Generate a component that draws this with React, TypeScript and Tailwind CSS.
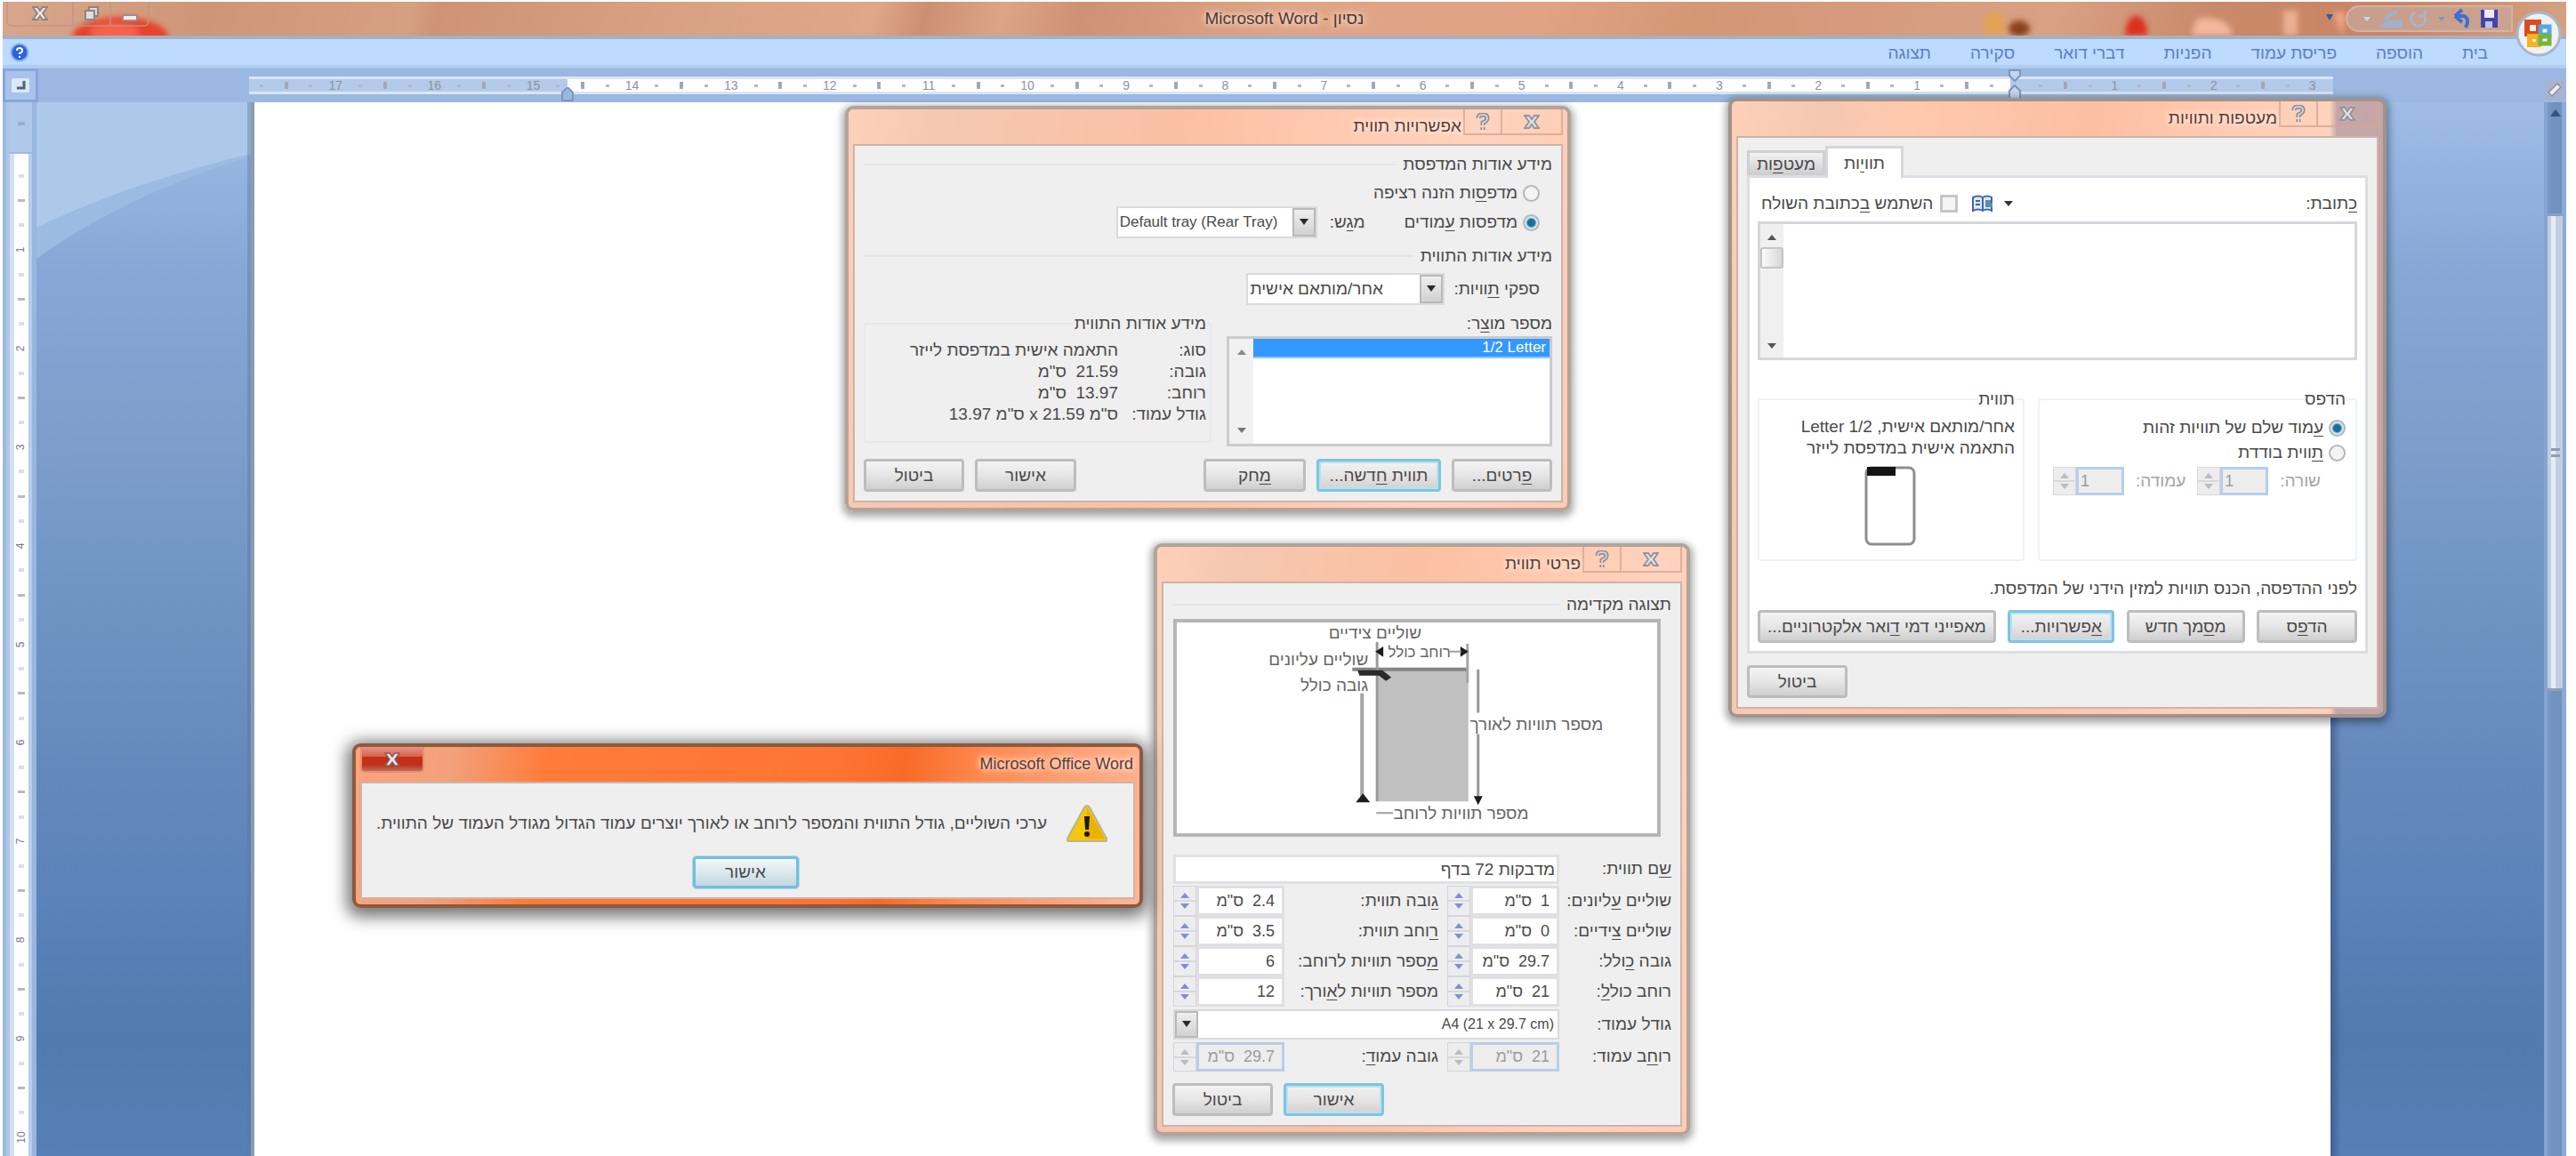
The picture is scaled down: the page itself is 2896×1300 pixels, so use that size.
import React from "react";

/** Renders a label whose access key is marked with "&". */
function Mn({ s }: { s: string }) {
  const i = s.indexOf("&");
  if (i < 0) return <>{s}</>;
  return (
    <>
      {s.slice(0, i)}
      <span className="underline underline-offset-3">{s[i + 1]}</span>
      {s.slice(i + 2)}
    </>
  );
}

function Btn({ s, className = "", primary = false }: { s: string; className?: string; primary?: boolean }) {
  const look = primary
    ? "border-[#7fc4de] bg-linear-to-b from-[#f3f3f3] via-[#e6e4e4] to-[#d6d0d0] shadow-[inset_0_0_0_2px_#b5e3f2]"
    : "border-[#bdbdbd] bg-linear-to-b from-[#f3f3f3] via-[#e6e6e6] to-[#cfcfcf]";
  return (
    <button type="button" className={`h-[37px] shrink-0 whitespace-nowrap rounded-[4px] border-3 text-center leading-6 ${look} ${className}`}>
      <Mn s={s} />
    </button>
  );
}

function Radio({ id, name, label, checked = false }: { id: string; name: string; label: string; checked?: boolean }) {
  return (
    <span className="flex h-6 items-center gap-1.5">
      <input
        id={id}
        name={name}
        type="radio"
        defaultChecked={checked}
        className="size-[19px] shrink-0 appearance-none rounded-full border-2 border-[#b4b8bb] bg-[#f4f4f4] checked:bg-[radial-gradient(circle,#1c6f9c_0_4px,#cfe6f1_6px)]"
      />
      <label htmlFor={id} className="whitespace-nowrap">
        <Mn s={label} />
      </label>
    </span>
  );
}

function Heading({ s }: { s: string }) {
  return (
    <div className="flex h-6 items-center gap-2">
      <h3 className="whitespace-nowrap">{s}</h3>
      <span className="h-0.5 flex-1 bg-[#e3e6e9]" />
    </div>
  );
}

function Combo({ id, value, className, arrow }: { id: string; value: string; className: string; arrow: "left" | "right" }) {
  return (
    <span dir="ltr" className={`flex items-stretch border-2 border-[#d9dade] bg-white ${arrow === "left" ? "flex-row-reverse" : ""} ${className}`}>
      <select
        id={id}
        className={`min-w-0 flex-1 appearance-none bg-transparent outline-none ${arrow === "left" ? "px-1 [text-align-last:right]" : "px-0.5"}`}
      >
        <option>{value}</option>
      </select>
      <span className="flex w-[26px] items-center justify-center border-2 border-[#b9b9b9] bg-linear-to-b from-[#eeeeee] to-[#d2d2d2]">
        <svg viewBox="0 0 12 8" className="h-2 w-3" aria-hidden="true">
          <path d="M1 0H11L6 7Z" fill="#2a2a2a" />
        </svg>
      </span>
    </span>
  );
}

function Spin({ id, value, disabled = false, className = "" }: { id: string; value: string; disabled?: boolean; className?: string }) {
  const arrow = disabled ? "#bcbcbc" : "#8290cf";
  const box = disabled ? "border-[#b7cfe9] bg-[#ededed] text-[#9c9c9c]" : "border-[#e0e0e4] bg-white";
  return (
    <span dir="ltr" className={`flex items-stretch bg-[#d9d9dc] ${className}`}>
      <span className="flex w-[26px] shrink-0 flex-col gap-0.5 border border-[#d6d6da]">
        <button type="button" aria-label="הגדל" className="flex flex-1 items-end justify-center bg-[#ededf0] pb-0.5">
          <svg viewBox="0 0 10 6" className="h-1.5 w-2.5" aria-hidden="true">
            <path d="M0 6H10L5 0Z" fill={arrow} />
          </svg>
        </button>
        <button type="button" aria-label="הקטן" className="flex flex-1 items-start justify-center bg-[#ededf0] pt-0.5">
          <svg viewBox="0 0 10 6" className="h-1.5 w-2.5" aria-hidden="true">
            <path d="M0 0H10L5 6Z" fill={arrow} />
          </svg>
        </button>
      </span>
      <input id={id} dir="rtl" defaultValue={value} disabled={disabled} className={`min-w-0 flex-1 whitespace-pre border-3 px-2 text-[18px] outline-none ${box}`} />
    </span>
  );
}

function Group({ legend, className, children }: { legend: string; className: string; children: React.ReactNode }) {
  return (
    <fieldset className={`min-w-0 rounded-[4px] border-2 ${className}`}>
      <legend className="h-6 leading-6">{legend}</legend>
      {children}
    </fieldset>
  );
}

const frames = {
  hot: "border-[#8b5a41] bg-[linear-gradient(100deg,#ffa37a_0%,#f2a17c_12%,#ff7b3a_24%,#ff7433_60%,#f96a26_68%,#ff8a52_78%,#ffb696_100%)] shadow-[0_4px_18px_6px_rgba(0,0,0,0.55)]",
  soft: "border-[#b2a49b] bg-[linear-gradient(100deg,#ffd0b8_0%,#f5c8b0_12%,#fbbfa3_42%,#ffc6ab_56%,#ffd3be_80%,#ffcbb2_100%)] shadow-[0_3px_9px_3px_rgba(0,0,0,0.35)]",
  shaded:
    "border-[#a0938f] bg-[linear-gradient(90deg,transparent_calc(100%-60px),rgba(158,138,155,0.6)_calc(100%-52px)),linear-gradient(100deg,#ffd0b8_0%,#f5c8b0_12%,#ffc9ae_24%,#fbbfa3_48%,#ffc6ab_58%,#ffd3be_80%,#ffcbb2_100%)] shadow-[0_3px_9px_3px_rgba(0,0,0,0.35)]",
};

function Win({ title, className, tone = "soft", children }: { title: string; className: string; tone?: keyof typeof frames; children: React.ReactNode }) {
  const hot = tone === "hot";
  const cell = "flex h-[29px] items-center justify-center border-2 border-t-0";
  return (
    <section dir="rtl" aria-label={title} className={`absolute rounded-[9px] border-4 px-[5px] pb-1.5 ${frames[tone]} ${className}`}>
      <header className="flex h-[39px] items-center justify-between">
        <div className="flex h-full items-center">
          {!hot && (
            <div className="flex items-start self-start">
              <button type="button" aria-label="סגור" className={`w-[70px] border-[#d5a793]/80 ${cell}`}>
                <svg viewBox="0 0 18 16" className="h-4 w-[18px]" aria-hidden="true">
                  <path d="M1 1H6L9 5L12 1H17L12 8L17 15H12L9 11L6 15H1L6 8Z" fill="#dfe2e8" stroke="#97939a" strokeWidth="2" />
                </svg>
              </button>
              <button type="button" aria-label="עזרה" className={`w-[42px] border-r-0 border-[#d5a793]/80 ${cell}`}>
                <svg viewBox="0 0 16 20" className="h-5 w-4" aria-hidden="true">
                  <path d="M3 6Q3 2 8 2Q13 2 13 6Q13 9 8 11V14M8 16V19" fill="none" stroke="#8d8a90" strokeWidth="5" />
                  <path d="M3 6Q3 2 8 2Q13 2 13 6Q13 9 8 11V14M8 16V19" fill="none" stroke="#cdd2da" strokeWidth="2" />
                </svg>
              </button>
            </div>
          )}
          <h2 className={`px-0.5 text-[#5b3c33] [text-shadow:0_0_6px_#fff,0_0_10px_#ffe6da] ${hot ? "text-[18px]" : ""}`} dir="auto">
            {title}
          </h2>
        </div>
        {hot && (
          <button
            type="button"
            aria-label="סגור"
            className="flex h-[29px] w-[72px] items-center justify-center self-start rounded-b-[5px] border-2 border-t-0 border-[#e88d72] bg-[linear-gradient(#e99486_0%,#d9604f_40%,#c62f19_42%,#c0301a_75%,#b9705c_100%)]"
          >
            <svg viewBox="0 0 18 16" className="h-4 w-[18px]" aria-hidden="true">
              <path d="M1 1H6L9 5L12 1H17L12 8L17 15H12L9 11L6 15H1L6 8Z" fill="#e9e9ee" stroke="#8c5b5b" strokeWidth="1.5" />
            </svg>
          </button>
        )}
      </header>
      <div className="border-2 border-[#cdb4a9] bg-[#efefef]">{children}</div>
    </section>
  );
}

function EnvelopesWindow() {
  return (
    <Win title="מעטפות ותוויות" tone="shaded" className="left-[1943px] top-[110px] w-[740px]">
      <div className="px-2.5 pt-[9px] pb-2.5">
        <div role="tablist" dir="ltr" className="flex h-[33px] items-end">
          <button type="button" role="tab" aria-selected="false" className="h-7 w-[88px] border-3 border-b-0 border-[#cfcfd3] bg-linear-to-b from-[#f2f2f2] to-[#cdcdcd] leading-6">
            <Mn s="מעט&פות" />
          </button>
          <button type="button" role="tab" aria-selected="true" className="relative -mb-[3px] h-9 w-[88px] border-3 border-b-0 border-[#d6d7dc] bg-white leading-6">
            <Mn s="תוו&יות" />
          </button>
        </div>
        <div className="border-3 border-[#dcdde2] bg-white px-[9px] pt-[15px] pb-[9px]">
          <div className="flex h-7 items-center justify-between">
            <label htmlFor="addr">
              <Mn s="&כתובת:" />
            </label>
            <div className="flex items-center">
              <button type="button" aria-label="פנקס כתובות" className="flex items-center gap-3">
                <svg viewBox="0 0 10 6" className="h-1.5 w-2.5" aria-hidden="true">
                  <path d="M0 0H10L5 6Z" fill="#333" />
                </svg>
                <svg viewBox="0 0 24 20" className="h-5 w-6" aria-hidden="true">
                  <path d="M1 3Q7 0 12 3Q17 0 22 3V18Q17 15 12 18Q7 15 1 18Z" fill="#dfe9f8" stroke="#3f65a8" strokeWidth="2" />
                  <path d="M12 3V18M4 7H9M4 11H9" stroke="#3f65a8" strokeWidth="2" />
                  <path d="M15 6H21V14H15Z" fill="#5c85cb" />
                  <path d="M19 9H23V14H19Z" fill="#5d9c70" />
                </svg>
              </button>
              <input id="ret" type="checkbox" className="mr-4 size-5 appearance-none border-3 border-[#c6c6c8] bg-[#f5f5f5]" />
              <label htmlFor="ret" className="mr-2 ml-1">
                <Mn s="השתמש &בכתובת השולח" />
              </label>
            </div>
          </div>
          <div className="mt-1.5 flex h-[156px] border-3 border-[#d6d7dc] bg-white">
            <textarea id="addr" className="flex-1 resize-none outline-none" />
            <div className="flex w-[26px] flex-col items-center bg-[#f0f0f0] pt-3 pb-2.5">
              <svg viewBox="0 0 10 6" className="h-1.5 w-2.5" aria-hidden="true">
                <path d="M0 6H10L5 0Z" fill="#555" />
              </svg>
              <span className="mt-2 h-6 w-full rounded-[3px] border-2 border-[#c4c4c8] bg-linear-to-r from-[#fbfbfb] to-[#d7d7da]" />
              <svg viewBox="0 0 10 6" className="mt-auto h-1.5 w-2.5" aria-hidden="true">
                <path d="M0 0H10L5 6Z" fill="#555" />
              </svg>
            </div>
          </div>
          <div className="mt-8 flex gap-[15px]">
            <Group legend="הדפס" className="h-[194px] w-[359px] border-[#eef2f5] px-[11px]">
              <div className="pt-2">
                <Radio id="full" name="print" label="&עמוד שלם של תוויות זהות" checked />
              </div>
              <div className="pt-1">
                <Radio id="single" name="print" label="&תווית בודדת" />
              </div>
              <div className="mt-1 flex h-8 items-center gap-[13px] pr-7 text-[#a5a5a5]">
                <label htmlFor="row">שורה:</label>
                <Spin id="row" value="1" disabled className="h-8 w-20 [&>input]:pl-0.5 [&>input]:text-left" />
                <label htmlFor="col">עמודה:</label>
                <Spin id="col" value="1" disabled className="h-8 w-20 [&>input]:pl-0.5 [&>input]:text-left" />
              </div>
            </Group>
            <Group legend="תווית" className="h-[194px] flex-1 border-[#eef2f5] px-[9px]">
              <p className="pt-[7px] leading-6">אחר/מותאם אישית, 1/2 Letter</p>
              <p className="leading-6">התאמה אישית במדפסת לייזר</p>
              <svg viewBox="0 0 60 92" className="mx-auto mt-2 h-[92px] w-[60px]" aria-label="תווית">
                <rect x="2" y="2" width="54" height="86" rx="6" fill="#fff" stroke="#8e8e8e" strokeWidth="3" />
                <rect x="3" y="1" width="32" height="10" fill="#141414" />
              </svg>
            </Group>
          </div>
          <p className="mt-[19px] leading-6">לפני ההדפסה, הכנס תוויות למזין הידני של המדפסת.</p>
          <div className="mt-3 flex justify-between">
            <Btn s="הד&פס" className="w-[113px]" />
            <Btn s="מ&סמך חדש" className="w-[133px]" />
            <Btn s="&אפשרויות..." primary className="w-[120px]" />
            <Btn s="מאפייני דמי &דואר אלקטרוניים..." className="w-[268px]" />
          </div>
        </div>
        <div className="mt-[13px] flex justify-end">
          <Btn s="ביטול" className="w-[113px]" />
        </div>
      </div>
    </Win>
  );
}

const labelInfo: [string, string][] = [
  ["סוג:", "התאמה אישית במדפסת לייזר"],
  ["גובה:", '21.59  ס"מ'],
  ["רוחב:", '13.97  ס"מ'],
  ["גודל עמוד:", 'ס"מ 21.59 x ס"מ 13.97'],
];

function OptionsWindow() {
  return (
    <Win title="אפשרויות תווית" className="left-[950px] top-[119px] w-[816px]">
      <div className="px-2.5 pt-[9px] pb-2.5">
        <Heading s="מידע אודות המדפסת" />
        <div className="mt-2 pr-3.5">
          <Radio id="cont" name="printer" label="מדפ&סות הזנה רציפה" />
        </div>
        <div className="mt-[3px] flex h-9 items-center pr-3.5">
          <Radio id="pages" name="printer" label="מדפסות &עמודים" checked />
          <label htmlFor="tray" className="mr-11 ml-[14px]">
            <Mn s="מ&גש:" />
          </label>
          <Combo id="tray" value="Default tray (Rear Tray)" arrow="right" className="h-9 w-[226px] text-[17px]" />
        </div>
        <div className="mt-2">
          <Heading s="מידע אודות התווית" />
        </div>
        <div className="mt-[7px] flex h-9 items-center pr-3.5">
          <label htmlFor="vendor" className="ml-2.5">
            <Mn s="ספקי &תוויות:" />
          </label>
          <Combo id="vendor" value="אחר/מותאם אישית" arrow="right" className="h-9 w-[223px]" />
        </div>
        <div className="mt-[9px] flex gap-[17px]">
          <div className="w-[366px]">
            <div id="prod" className="h-6 leading-6">
              <Mn s="מספר מו&צר:" />
            </div>
            <div className="mt-0.5 flex h-[124px] border-3 border-[#c9cbd0] bg-white">
              <ul role="listbox" aria-labelledby="prod" className="flex-1">
                <li role="option" aria-selected="true" dir="ltr" className="h-[22px] border-b-2 border-[#8fc6ff] bg-[#3398ff] pr-1 text-right text-[17px] leading-5 text-white">
                  1/2 Letter
                </li>
              </ul>
              <div className="flex w-[27px] flex-col items-center justify-between bg-[#f1f1f1] py-3">
                <svg viewBox="0 0 10 6" className="h-1.5 w-2.5" aria-hidden="true">
                  <path d="M0 6H10L5 0Z" fill="#8a8a8a" />
                </svg>
                <svg viewBox="0 0 10 6" className="h-1.5 w-2.5" aria-hidden="true">
                  <path d="M0 0H10L5 6Z" fill="#777" />
                </svg>
              </div>
            </div>
          </div>
          <Group legend="מידע אודות התווית" className="h-[146px] flex-1 border-[#e6e9ec] px-1">
            <dl className="grid grid-cols-[99px_1fr] pt-1.5 leading-6">
              {labelInfo.map(([k, v]) => (
                <React.Fragment key={k}>
                  <dt>{k}</dt>
                  <dd className="whitespace-pre">{v}</dd>
                </React.Fragment>
              ))}
            </dl>
          </Group>
        </div>
        <div className="mt-3.5 flex gap-3">
          <Btn s="&פרטים..." className="w-[113px]" />
          <Btn s="תווית &חדשה..." primary className="w-[140px]" />
          <Btn s="&מחק" className="w-[115px]" />
          <Btn s="אישור" className="mr-auto w-[114px]" />
          <Btn s="ביטול" className="w-[113px]" />
        </div>
      </div>
    </Win>
  );
}

function Preview() {
  return (
    <svg viewBox="0 0 550 246" className="block w-full" fontSize="19" fill="#666" direction="rtl" role="img" aria-label="תצוגה מקדימה">
      <rect x="2" y="2" width="546" height="242" fill="#fff" stroke="#b5b5b5" strokeWidth="4" />
      <rect x="229" y="57" width="104" height="149" fill="#c0c0c0" />
      <path d="M202 57H333" stroke="#858585" strokeWidth="4" />
      <path d="M230 26V206" stroke="#9a9a9a" strokeWidth="3" />
      <path d="M332 28V72" stroke="#a5a5a5" strokeWidth="3" />
      <path d="M213 84V204" stroke="#a5a5a5" strokeWidth="4" />
      <path d="M206 207H222L214 197ZM228 37L237 31V43ZM333 37L324 31V43Z" fill="#1c1c1c" />
      <path d="M344 57V106M344 130V205" stroke="#999" strokeWidth="3" />
      <path d="M344 210L339 200H349Z" fill="#1c1c1c" />
      <path d="M208 58H236L246 66L240 70L232 64H210Z" fill="#2a2a2a" />
      <path d="M229 219H248M312 37H325" stroke="#a0a0a0" strokeWidth="2" />
      <text x="280" y="22">שוליים צידיים</text>
      <text x="313" y="43" fontSize="17">רוחב כולל</text>
      <text x="220" y="52">שוליים עליונים</text>
      <text x="220" y="81">גובה כולל</text>
      <text x="485" y="125">מספר תוויות לאורך</text>
      <text x="401" y="226">מספר תוויות לרוחב</text>
    </svg>
  );
}

const cm = (n: string) => `${n}  ס"מ`;
const fieldRows = [
  ["שוליים &עליונים:", cm("1"), "&גובה תווית:", cm("2.4")],
  ["שוליים &צידיים:", cm("0"), "&רוחב תווית:", cm("3.5")],
  ["גובה &כולל:", cm("29.7"), "&מספר תוויות לרוחב:", "6"],
  ["רוחב כול&ל:", cm("21"), "מספר תוויות ל&אורך:", "12"],
];

function DetailsWindow() {
  const grid = "grid grid-cols-[126px_126px_183px_125px] items-center";
  return (
    <Win title="פרטי תווית" className="left-[1297px] top-[611px] w-[603px]">
      <div className="px-2.5 pt-3 pb-2.5">
        <Heading s="תצוגה מקדימה" />
        <div className="mt-1 mr-3 ml-px">
          <Preview />
        </div>
        <div className={`mt-5 h-[33px] ${grid}`}>
          <label htmlFor="lname">
            <Mn s="&שם תווית:" />
          </label>
          <input id="lname" defaultValue="מדבקות 72 בדף" className="col-span-3 h-[33px] border-3 border-[#e0e1e5] bg-white px-0.5 outline-none" />
        </div>
        <div className="mt-0.5">
          {fieldRows.map(([a, av, b, bv], i) => (
            <div key={a} className={`h-[34px] ${grid}`}>
              <label htmlFor={`a${i}`}>
                <Mn s={a} />
              </label>
              <Spin id={`a${i}`} value={av} className="h-[34px]" />
              <label htmlFor={`b${i}`} className="pr-2.5">
                <Mn s={b} />
              </label>
              <Spin id={`b${i}`} value={bv} className="h-[34px]" />
            </div>
          ))}
        </div>
        <div className={`mt-[3px] h-[34px] ${grid}`}>
          <label htmlFor="psize">גודל עמוד:</label>
          <Combo id="psize" value="A4 (21 x 29.7 cm)" arrow="left" className="col-span-3 h-[34px] text-[16px]" />
        </div>
        <div className={`mt-[3px] h-[33px] ${grid}`}>
          <label htmlFor="pw">
            <Mn s="רו&חב עמוד:" />
          </label>
          <Spin id="pw" value={cm("21")} disabled className="h-[33px]" />
          <label htmlFor="ph" className="pr-2.5">
            <Mn s="גובה עמו&ד:" />
          </label>
          <Spin id="ph" value={cm("29.7")} disabled className="h-[33px]" />
        </div>
        <div className="mt-[13px] flex justify-end gap-3">
          <Btn s="אישור" primary className="w-[113px]" />
          <Btn s="ביטול" className="w-[113px]" />
        </div>
      </div>
    </Win>
  );
}

function AlertWindow() {
  return (
    <Win title="Microsoft Office Word" tone="hot" className="left-[396px] top-[836px] w-[889px]">
      <div className="pt-6 pr-[29px] pb-2.5 pl-6">
        <div className="flex items-center gap-[22px]">
          <svg viewBox="0 0 46 42" className="h-[42px] w-[46px] shrink-0" aria-hidden="true">
            <path d="M23 1Q25 1 26 3L45 38Q46 41 43 41H3Q0 41 1 38L20 3Q21 1 23 1Z" fill="#f4c60c" stroke="#b9b39a" strokeWidth="2" />
            <path d="M23 3L43 38H23Z" fill="#e8a400" opacity="0.6" />
            <path d="M20 13H26L25 28H21Z" fill="#1b1b1b" />
            <circle cx="23" cy="33" r="3" fill="#1b1b1b" />
          </svg>
          <p className="whitespace-nowrap">ערכי השוליים, גודל התווית והמספר לרוחב או לאורך יוצרים עמוד הגדול מגודל העמוד של התווית.</p>
        </div>
        <button
          type="button"
          className="mx-auto mt-4 block h-9 w-[119px] rounded-[4px] border-3 border-[#6fc0e0] bg-linear-to-b from-[#f2f8fa] via-[#dbe8ee] to-[#c4d6df] leading-6 shadow-[0_0_0_1px_#bcd6e0]"
        >
          אישור
        </button>
      </div>
    </Win>
  );
}

type Slot = { kind: "dot" | "tick" | "num" | "none"; n?: number };

function buildHorizontal(): Slot[] {
  const slots: Slot[] = [{ kind: "dot" }];
  for (let n = 17; n >= -3; n--) {
    slots.push({ kind: "tick" }, { kind: "dot" });
    slots.push(n === 0 ? { kind: "none" } : { kind: "num", n: Math.abs(n) });
    if (n > -3) slots.push({ kind: "dot" });
  }
  return slots;
}

function buildVertical(): Slot[] {
  const slots: Slot[] = [];
  for (let n = 1; n <= 10; n++) {
    slots.push({ kind: "dot" }, { kind: "tick" }, { kind: "dot" }, { kind: "num", n });
  }
  return slots;
}

function RulerH() {
  return (
    <div dir="ltr" className="flex h-[38px] bg-[#9ab8e1]">
      <div className="flex h-full w-10 items-center justify-center border-3 border-[#88a5dd] bg-[#a9c3ea]">
        <svg viewBox="0 0 20 16" className="h-4 w-5" aria-hidden="true">
          <rect width="20" height="16" rx="2" fill="#dce8f6" />
          <path d="M14 3V11H6" fill="none" stroke="#4e6382" strokeWidth="3" />
        </svg>
      </div>
      <div className="relative mr-[262px] ml-[237px] mt-[9px] flex h-5 flex-1 items-center bg-[linear-gradient(90deg,#b3caea_0_358px,#fff_358px_calc(100%-363px),#b3caea_calc(100%-363px))] pr-2.5 shadow-[inset_0_3px_#dbe5f3,inset_0_-3px_#dbe5f3]">
        {buildHorizontal().map((s, i) => (
          <span key={i} className="flex min-w-0 flex-1 items-center justify-center text-[14px] leading-none text-[#8e929a]">
            {s.kind === "num" && s.n}
            {s.kind === "dot" && <span className="h-[3px] w-1 bg-[#b6b9c2]" />}
            {s.kind === "tick" && <span className="h-2 w-1 bg-[#a4a8b2]" />}
          </span>
        ))}
        <svg viewBox="0 0 14 16" className="absolute left-[351px] top-3 h-4 w-3.5" aria-hidden="true">
          <path d="M7 0L13 6V15H1V6Z" fill="#9bb7dd" stroke="#7c97c0" strokeWidth="2" />
        </svg>
        <svg viewBox="0 0 14 36" className="absolute -top-2 right-[351px] h-9 w-3.5" aria-hidden="true">
          <path d="M1 1H13V7L7 13L1 7ZM7 18L13 24V35H1V24Z" fill="#c5d5ec" stroke="#7c97c0" strokeWidth="2" />
        </svg>
      </div>
    </div>
  );
}

function RulerV() {
  return (
    <div dir="ltr" className="flex h-full w-[38px] flex-col bg-[linear-gradient(90deg,#9bbae2_0_4px,#afc7e7_4px_8px,#d4e0f2_8px_13px,#fff_13px_29px,#b8cceb_29px_33px,#97b6e0_33px)]">
      <div className="ml-2 h-[58px] w-[25px] border-b-2 border-[#9fb9df] bg-[#b0c8e9] pt-3">
        <span className="mx-auto mt-2.5 block h-1 w-2 bg-[#98aed0]" />
      </div>
      <div className="ml-3 flex w-[17px] flex-1 flex-col pt-[11px] pb-[7px]">
        {buildVertical().map((s, i) => (
          <span key={i} className="flex min-h-0 flex-1 items-center justify-center text-[12px] leading-none text-[#77797f]">
            {s.kind === "num" && <span className="-rotate-90">{s.n}</span>}
            {s.kind === "dot" && <span className="h-1 w-1.5 bg-[#dedee2]" />}
            {s.kind === "tick" && <span className="h-[3px] w-2 bg-[#b9bac0]" />}
          </span>
        ))}
      </div>
    </div>
  );
}

function TitleBar() {
  return (
    <div className="relative flex h-[38px] items-center justify-center overflow-hidden bg-[linear-gradient(105deg,#d9a78d_0%,#cf9577_8%,#d79f81_16%,#cd9374_17%,#dba385_28%,#dfa687_34%,#cb9071_36%,#dda486_39%,#cd9273_42%,#e0a486_50%,#e0a384_60%,#d39776_66%,#d9a084_80%,#c98a6a_86%,#c98464_93%,#d5a183_100%)]">
      <svg viewBox="0 0 2882 38" preserveAspectRatio="xMinYMax slice" className="absolute inset-0 size-full" aria-hidden="true">
        <defs>
          <filter id="soft" x="-20%" y="-20%" width="140%" height="140%">
            <feGaussianBlur stdDeviation="3" />
          </filter>
        </defs>
        <g filter="url(#soft)">
          <ellipse cx="132" cy="40" rx="54" ry="23" fill="#e8432b" />
          <ellipse cx="126" cy="34" rx="28" ry="10" fill="#f8624c" />
          <path d="M2228 38V16Q2232 10 2250 14V38Z" fill="#e2a355" />
          <ellipse cx="2267" cy="30" rx="12" ry="9" fill="#88431d" />
          <path d="M2386 38Q2388 16 2398 16Q2410 16 2411 38Z" fill="#dd2d1e" />
          <path d="M2462 38Q2462 16 2478 18Q2506 20 2506 38Z" fill="#f3b79c" />
          <path d="M2564 38V10H2580V38Z" fill="#eab093" />
          <path d="M2630 38L2620 12H2634Z" fill="#f0a688" />
        </g>
      </svg>
      <div dir="ltr" className="absolute left-1 top-0 flex h-7 rounded-b-[6px] border-2 border-t-0 border-[#bb9787]/70">
        <button type="button" aria-label="סגור" className="flex w-[74px] items-center justify-center border-r-2 border-[#bb9787]/70">
          <svg viewBox="0 0 18 16" className="h-4 w-[18px]" aria-hidden="true">
            <path d="M1 1H6L9 5L12 1H17L12 8L17 15H12L9 11L6 15H1L6 8Z" fill="#eee" stroke="#8f837f" strokeWidth="2" />
          </svg>
        </button>
        <button type="button" aria-label="שחזר" className="flex w-[42px] items-center justify-center border-r-2 border-[#bb9787]/70">
          <svg viewBox="0 0 18 18" className="size-[18px]" aria-hidden="true">
            <path d="M6 2H16V12H12V6H6ZM2 6H12V16H2Z" fill="#ddd" stroke="#8f837f" strokeWidth="2" />
          </svg>
        </button>
        <button type="button" aria-label="מזער" className="flex w-[41px] items-end justify-center pb-1">
          <span className="h-2 w-[18px] rounded-[2px] border-2 border-[#9f8d86] bg-[#eee]" />
        </button>
      </div>
      <h1 dir="ltr" className="relative text-[19px] text-[#4d3a33] [text-shadow:0_0_6px_#ffe3d5,0_0_10px_#ffe3d5]">
        Microsoft Word - נסיון
      </h1>
      <svg viewBox="0 0 8 8" className="absolute right-[262px] top-3.5 h-2 w-2" aria-hidden="true">
        <path d="M0 0H8L4 7Z" fill="#3e5c92" />
      </svg>
      <div className="absolute right-[60px] top-1 flex h-[30px] w-[188px] items-center rounded-l-full border-2 border-[#d3b3a2] bg-[#c8a596]/80 pr-3.5">
        <svg viewBox="0 0 154 24" className="h-6 w-[154px]" aria-hidden="true">
          <path d="M2 10H10L6 15Z" fill="#cfd7e2" />
          <path d="M26 12L40 3M24 20H44V16H28Z" stroke="#9cb2cf" strokeWidth="4" fill="#8aa3c8" />
          <path d="M60 5A8 8 0 1 0 71 9M71 2V9H64" fill="none" stroke="#a5b6cb" strokeWidth="3" />
          <path d="M86 10H94L90 15Z" fill="#7d93bd" />
          <path d="M105 9H115Q122 12 117 22M105 9L113 2M105 9L113 16" fill="none" stroke="#3d6fd0" strokeWidth="4" />
          <path d="M134 2H153V22H134Z" fill="#4742a8" />
          <path d="M138 2H149V11H138Z" fill="#eceafc" />
          <path d="M139 15H147V22H139Z" fill="#b8c4f0" />
        </svg>
      </div>
    </div>
  );
}

const ribbonTabs = ["בית", "הוספה", "פריסת עמוד", "הפניות", "דברי דואר", "סקירה", "תצוגה"];

function Ribbon() {
  return (
    <nav className="flex h-[37px] items-center justify-between border-t-4 border-b-4 border-t-[#a3b1c3] border-b-[#aecdf1] bg-[#bddaff] pr-[88px] pl-2 text-[#5a80c4]">
      <div role="tablist" className="flex gap-11">
        {ribbonTabs.map((t) => (
          <button key={t} type="button" role="tab" className="whitespace-nowrap pt-1">
            {t}
          </button>
        ))}
      </div>
      <button type="button" aria-label="עזרה">
        <svg viewBox="0 0 22 22" className="size-[22px]" aria-hidden="true">
          <circle cx="11" cy="11" r="9.5" fill="#2c62e0" stroke="#8fb0e8" strokeWidth="2" />
          <path d="M8 9Q8 6 11 6Q14 6 14 9Q14 11 11 12V13M11 15V17" fill="none" stroke="#fff" strokeWidth="2" />
        </svg>
      </button>
    </nav>
  );
}

function ScrollBar() {
  return (
    <div className="relative flex w-[25px] flex-col items-center bg-[linear-gradient(90deg,#85a4d0_0_4px,#7897c6_4px_8px,#7191bf_8px_20px,#8caad8_20px)]">
      <svg viewBox="0 0 12 8" className="mt-2 h-2 w-3" aria-hidden="true">
        <path d="M0 8H12L6 0Z" fill="#38517e" />
      </svg>
      <div className="mt-[109px] flex h-[537px] w-[17px] items-center justify-center border-y-3 border-[#8e9fbd] bg-[linear-gradient(90deg,#c3cee0_0_4px,#e6ecf6_4px_9px,#c3cfe0_9px)]">
        <span className="h-2.5 w-2.5 border-y-3 border-[#8f9db4]" />
      </div>
    </div>
  );
}

export default function App() {
  return (
    <main
      dir="rtl"
      className="relative flex h-screen w-full flex-col overflow-hidden bg-white pt-0.5 pr-[11px] pl-[3px] font-['Liberation_Sans',sans-serif] text-[19px] text-[#4a4a4a]"
    >
      <TitleBar />
      <Ribbon />
      <RulerH />
      <div className="flex min-h-0 flex-1 bg-[linear-gradient(#9fbde6_0%,#95b4e0_6%,#87a8d6_16%,#7c9dca_34%,#7196c5_45%,#6488bb_64%,#5b83ba_76%,#517aae_89%,#5780b7_100%)]">
        <ScrollBar />
        <div className="w-[240px] shrink-0 bg-linear-to-l from-transparent from-95% to-[#2c4470]/50" />
        <div className="flex-1 border-l-4 border-[#8c9bae] bg-white" />
        <svg viewBox="0 0 241 1185" preserveAspectRatio="none" className="h-full w-[241px] shrink-0" aria-hidden="true">
          <path d="M0 0H241V61Q100 104 0 176Z" fill="#9cbbe3" />
          <path d="M0 0H241V58Q100 92 0 141Z" fill="#adc9e9" />
          <path d="M237 0H241V1185H237Z" fill="#5a75a0" opacity="0.4" />
        </svg>
        <RulerV />
      </div>
      <button type="button" aria-label="לחצן Office" className="absolute right-4 top-3 size-[52px]">
        <svg viewBox="0 0 52 52" className="size-full" aria-hidden="true">
          <circle cx="26" cy="26" r="24" fill="#eef1f5" stroke="#aab6c8" strokeWidth="3" />
          <path d="M13 13H26V26H13Z" fill="none" stroke="#db4b1c" strokeWidth="6" />
          <path d="M28 18H38V27H28Z" fill="none" stroke="#5aa6dc" strokeWidth="5" />
          <path d="M16 29H26V38H16Z" fill="none" stroke="#f2b51e" strokeWidth="6" />
          <path d="M28 29H38V37H28Z" fill="none" stroke="#76b53c" strokeWidth="5" />
        </svg>
      </button>
      <button type="button" aria-label="סרגל" className="absolute right-[13px] top-[90px] flex h-[22px] w-[22px] items-center justify-center rounded-[3px] bg-[#a9b3cd]">
        <svg viewBox="0 0 16 16" className="size-4" aria-hidden="true">
          <path d="M1 11L11 1L15 5L5 15Z" fill="#eeeaf4" stroke="#8a8fa8" strokeWidth="1.5" />
        </svg>
      </button>
      <OptionsWindow />
      <EnvelopesWindow />
      <DetailsWindow />
      <AlertWindow />
    </main>
  );
}
